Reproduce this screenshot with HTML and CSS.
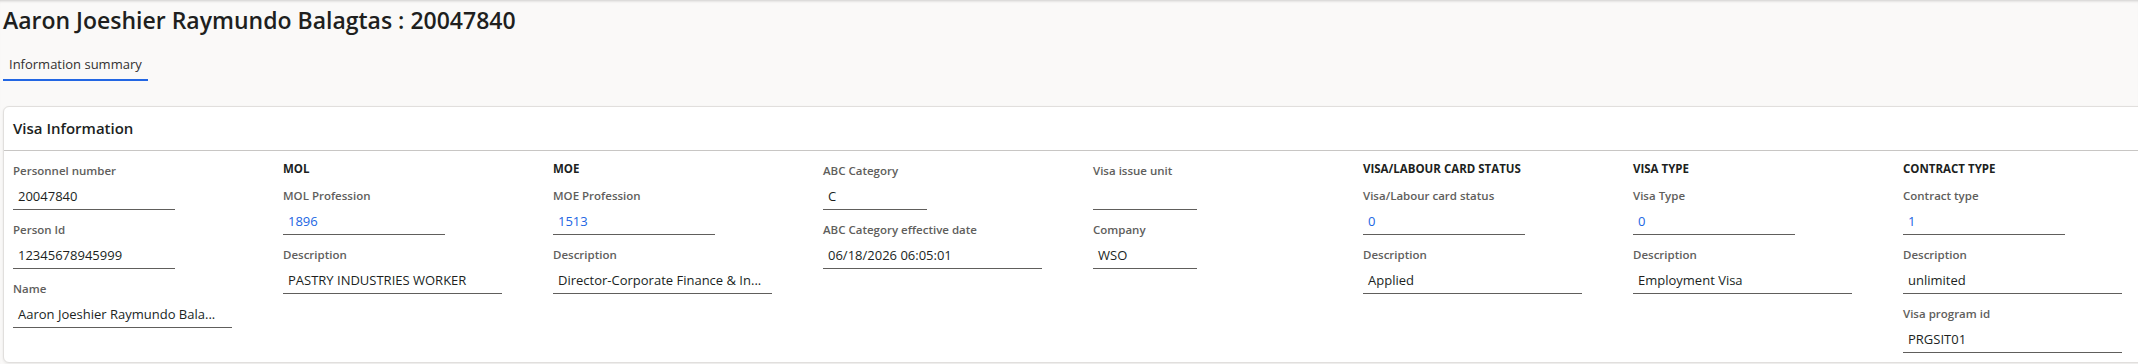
FILE: index.html
```html
<!DOCTYPE html>
<html lang="en">
<head>
  <meta charset="UTF-8">
  <meta name="viewport" content="width=device-width, initial-scale=1.0">
  <title>Aaron Joeshier Raymundo Balagtas : 20047840</title>
  <link rel="stylesheet" href="styles.css">
</head>
<body>
  <div class="page">
    <h1 class="page-title">Aaron Joeshier Raymundo Balagtas : 20047840</h1>

    <div class="tabs">
      <div class="tab active">Information summary</div>
    </div>

    <section class="card">
      <h2 class="card-header">Visa Information</h2>

      <div class="card-body">
        <!-- Employee -->
        <div class="column">
          <div class="field">
            <div class="field-label">Personnel number</div>
            <div class="field-input medium">20047840</div>
          </div>
          <div class="field">
            <div class="field-label">Person Id</div>
            <div class="field-input medium">12345678945999</div>
          </div>
          <div class="field">
            <div class="field-label">Name</div>
            <div class="field-input large">Aaron Joeshier Raymundo Bala...</div>
          </div>
        </div>

        <!-- MOL -->
        <div class="column">
          <div class="group-title">MOL</div>
          <div class="field">
            <div class="field-label">MOL Profession</div>
            <div class="field-input medium link">1896</div>
          </div>
          <div class="field">
            <div class="field-label">Description</div>
            <div class="field-input large">PASTRY INDUSTRIES WORKER</div>
          </div>
        </div>

        <!-- MOE -->
        <div class="column">
          <div class="group-title">MOE</div>
          <div class="field">
            <div class="field-label">MOE Profession</div>
            <div class="field-input medium link">1513</div>
          </div>
          <div class="field">
            <div class="field-label">Description</div>
            <div class="field-input large">Director-Corporate Finance &amp; In...</div>
          </div>
        </div>

        <!-- ABC -->
        <div class="column">
          <div class="field">
            <div class="field-label">ABC Category</div>
            <div class="field-input small">C</div>
          </div>
          <div class="field">
            <div class="field-label">ABC Category effective date</div>
            <div class="field-input large">06/18/2026 06:05:01</div>
          </div>
        </div>

        <!-- Issue unit -->
        <div class="column">
          <div class="field">
            <div class="field-label">Visa issue unit</div>
            <div class="field-input small"></div>
          </div>
          <div class="field">
            <div class="field-label">Company</div>
            <div class="field-input small">WSO</div>
          </div>
        </div>

        <!-- Card status -->
        <div class="column">
          <div class="group-title">VISA/LABOUR CARD STATUS</div>
          <div class="field">
            <div class="field-label">Visa/Labour card status</div>
            <div class="field-input medium link">0</div>
          </div>
          <div class="field">
            <div class="field-label">Description</div>
            <div class="field-input large">Applied</div>
          </div>
        </div>

        <!-- Visa type -->
        <div class="column">
          <div class="group-title">VISA TYPE</div>
          <div class="field">
            <div class="field-label">Visa Type</div>
            <div class="field-input medium link">0</div>
          </div>
          <div class="field">
            <div class="field-label">Description</div>
            <div class="field-input large">Employment Visa</div>
          </div>
        </div>

        <!-- Contract type -->
        <div class="column">
          <div class="group-title">CONTRACT TYPE</div>
          <div class="field">
            <div class="field-label">Contract type</div>
            <div class="field-input medium link">1</div>
          </div>
          <div class="field">
            <div class="field-label">Description</div>
            <div class="field-input large">unlimited</div>
          </div>
          <div class="field">
            <div class="field-label">Visa program id</div>
            <div class="field-input large">PRGSIT01</div>
          </div>
        </div>
      </div>
    </section>
  </div>
</body>
</html>
```

FILE: styles.css
```css
html, body {
  margin: 0;
  overflow: hidden;
}
body {
  font-family: 'Segoe UI', 'Open Sans', sans-serif;
  background-color: #faf9f8;
  color: #323130;
}
.page {
  padding: 4px 0 0 3px;
  min-height: 364px;
  box-sizing: border-box;
  box-shadow: inset 0 3px 3px -2px rgba(0, 0, 0, 0.18);
}
.page-title {
  margin: 0;
  font-size: 23px;
  line-height: 32px;
  font-weight: 600;
  color: #201f1e;
}
.tabs {
  display: flex;
  margin-top: 12px;
}
.tab {
  padding: 6px 6px 5px;
  font-size: 13px;
  line-height: 20px;
  color: #323130;
  border-bottom: 2px solid transparent;
}
.tab.active {
  border-bottom-color: #2266e3;
}
.card {
  margin-top: 25px;
  min-width: 2180px;
  background-color: #fff;
  border: 1px solid #e1dfdd;
  border-radius: 6px;
  box-shadow: 0 1px 3px rgba(0, 0, 0, 0.08);
}
.card-header {
  margin: 0;
  padding: 10px 9px 11px;
  font-size: 15px;
  line-height: 22px;
  font-weight: 600;
  color: #201f1e;
  border-bottom: 1px solid #c8c6c4;
}
.card-body {
  display: grid;
  grid-template-columns: repeat(8, 270px);
  padding: 12px 9px 9px;
  align-items: start;
}
.group-title {
  margin: -2px 0 11px;
  font-size: 11.5px;
  line-height: 16px;
  font-weight: 700;
  color: #201f1e;
}
.field {
  margin-bottom: 12px;
}
.field:last-child {
  margin-bottom: 0;
}
.field-label {
  font-size: 11.5px;
  line-height: 16px;
  font-weight: 600;
  color: #605e5c;
  margin-bottom: 1px;
}
.field-input {
  box-sizing: border-box;
  height: 30px;
  padding: 3px 5px 0;
  font-size: 13px;
  line-height: 26px;
  color: #201f1e;
  border-bottom: 1px solid #605e5c;
  white-space: nowrap;
  overflow: hidden;
  text-overflow: ellipsis;
}
.field-input.small {
  width: 104px;
}
.field-input.medium {
  width: 162px;
}
.field-input.large {
  width: 219px;
}
.field-input.link {
  color: #2266e3;
}
```
